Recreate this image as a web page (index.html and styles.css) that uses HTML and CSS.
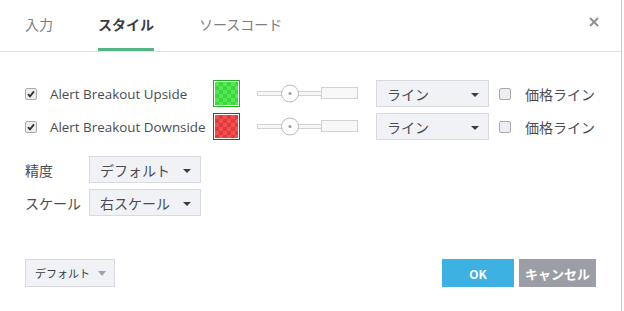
FILE: index.html
```html
<!DOCTYPE html>
<html lang="ja">
<head>
    <meta charset="UTF-8">
    <title>スタイル</title>
    <link rel="stylesheet" href="styles.css">
</head>
<body>
    <div class="dialog">
        <div class="header">
            <div class="tabs">
                <span class="tab">入力</span>
                <span class="tab active">スタイル</span>
                <span class="tab">ソースコード</span>
            </div>
            <span class="close">
                <svg width="10" height="10" viewBox="0 0 10 10"><path d="M1 1L9 9M9 1L1 9" stroke="#8f9197" stroke-width="2"/></svg>
            </span>
        </div>

        <div class="content">
            <div class="plot-row">
                <span class="check on"><svg width="12" height="12" viewBox="0 0 12 12"><path d="M3 6.2L5 8.4L9 3.4" fill="none" stroke="#2f3135" stroke-width="1.8"/></svg></span>
                <span class="plot-name">Alert Breakout Upside</span>
                <span class="swatch green"><span class="swatch-fill"></span></span>
                <svg class="slider" width="104" height="20" viewBox="0 0 104 20">
                    <rect x="0.5" y="7.5" width="24" height="4" fill="#f7f7f7" stroke="#d0d2d6"/>
                    <rect x="41.5" y="7.5" width="24" height="4" fill="#f7f7f7" stroke="#d0d2d6"/>
                    <rect x="64.5" y="3.5" width="36" height="11" fill="#f8f8f8" stroke="#d0d2d6"/>
                    <circle cx="33" cy="9.5" r="8.5" fill="#fff" stroke="#b9bcc4"/>
                    <circle cx="33" cy="9.5" r="1.5" fill="#9a9da5"/>
                </svg>
                <div class="select line-select">ライン<span class="caret"></span></div>
                <span class="check"></span>
                <span class="price-label">価格ライン</span>
            </div>
            <div class="plot-row">
                <span class="check on"><svg width="12" height="12" viewBox="0 0 12 12"><path d="M3 6.2L5 8.4L9 3.4" fill="none" stroke="#2f3135" stroke-width="1.8"/></svg></span>
                <span class="plot-name">Alert Breakout Downside</span>
                <span class="swatch red"><span class="swatch-fill"></span></span>
                <svg class="slider" width="104" height="20" viewBox="0 0 104 20">
                    <rect x="0.5" y="7.5" width="24" height="4" fill="#f7f7f7" stroke="#d0d2d6"/>
                    <rect x="41.5" y="7.5" width="24" height="4" fill="#f7f7f7" stroke="#d0d2d6"/>
                    <rect x="64.5" y="3.5" width="36" height="11" fill="#f8f8f8" stroke="#d0d2d6"/>
                    <circle cx="33" cy="9.5" r="8.5" fill="#fff" stroke="#b9bcc4"/>
                    <circle cx="33" cy="9.5" r="1.5" fill="#9a9da5"/>
                </svg>
                <div class="select line-select">ライン<span class="caret"></span></div>
                <span class="check"></span>
                <span class="price-label">価格ライン</span>
            </div>

            <div class="field-row first">
                <span class="field-label">精度</span>
                <div class="select small-select">デフォルト<span class="caret"></span></div>
            </div>
            <div class="field-row">
                <span class="field-label">スケール</span>
                <div class="select small-select">右スケール<span class="caret"></span></div>
            </div>
        </div>

        <div class="footer">
            <div class="defaults">デフォルト<span class="caret light"></span></div>
            <div class="actions">
                <button class="btn ok">OK</button>
                <button class="btn cancel">キャンセル</button>
            </div>
        </div>
    </div>
    <div class="backdrop"></div>
</body>
</html>
```

FILE: styles.css
```css
body {
    margin: 0;
    display: flex;
    font-family: "Noto Sans CJK JP", "Noto Sans", sans-serif;
    background-color: #fff;
    color: #4a4c52;
}

.dialog {
    width: 621px;
    height: 311px;
    border-right: 1px solid #c9cacd;
    background-color: #fff;
    display: flex;
    flex-direction: column;
}

.backdrop {
    flex: 1;
    background-color: #fff;
}

.header {
    height: 51px;
    border-bottom: 1px solid #e0e1e4;
    display: flex;
    justify-content: space-between;
    padding: 0 22px 0 25px;
}

.tabs {
    display: flex;
    gap: 45px;
}

.tab {
    font-size: 14px;
    color: #7a7d84;
    line-height: 48px;
    height: 48px;
    border-bottom: 3px solid transparent;
}

.tab.active {
    color: #3a3d44;
    font-weight: bold;
    border-bottom-color: #52b686;
}

.close {
    display: flex;
    align-items: flex-start;
    padding-top: 17px;
}

.content {
    padding: 28px 25px 0 25px;
    flex: 1;
}

.plot-row {
    display: flex;
    align-items: center;
    height: 27px;
    margin-bottom: 6px;
}

.check {
    width: 10px;
    height: 10px;
    border: 1px solid #a8aab0;
    border-radius: 2px;
    background-color: #eceef1;
    display: flex;
}

.check svg {
    margin: -1px;
}

.plot-name {
    font-family: "Open Sans", sans-serif;
    font-size: 13.4px;
    color: #4a4c52;
    margin-left: 13px;
    width: 163px;
}

.swatch {
    width: 27px;
    height: 27px;
    border: 1px solid;
    padding: 1px;
    box-sizing: border-box;
    display: flex;
}

.swatch.green {
    border-color: #22b022;
}

.swatch.red {
    border-color: #b31c1c;
}

.swatch-fill {
    flex: 1;
    background-size: 8px 8px;
}

.green .swatch-fill {
    background-color: #48e048;
    background-image: repeating-conic-gradient(#3ed43e 0 25%, #52ea52 0 50%);
}

.red .swatch-fill {
    background-color: #ee4444;
    background-image: repeating-conic-gradient(#e03a3a 0 25%, #f25050 0 50%);
}

.slider {
    margin-left: 17px;
}

.select {
    box-sizing: border-box;
    height: 27px;
    border: 1px solid #d8dadf;
    background-color: #f1f2f6;
    font-size: 14px;
    color: #4a4c52;
    display: flex;
    align-items: center;
    justify-content: space-between;
    padding: 0 9px 0 10px;
}

.line-select {
    width: 113px;
    margin-left: 15px;
    margin-right: 10px;
}

.caret {
    width: 0;
    height: 0;
    border-left: 4px solid transparent;
    border-right: 4px solid transparent;
    border-top: 4px solid #3a3d44;
    margin-top: 2px;
}

.caret.light {
    border-left-width: 4px;
    border-right-width: 4px;
    border-top: 5px solid #a0a2a8;
    margin-left: 8px;
    margin-top: 0;
}

.price-label {
    font-size: 14px;
    margin-left: 14px;
    color: #4a4c52;
}

.field-row {
    display: flex;
    align-items: center;
    height: 27px;
    margin-bottom: 6px;
}

.field-row.first {
    margin-top: 16px;
}

.field-label {
    width: 64px;
    font-size: 14px;
}

.small-select {
    width: 112px;
    padding-left: 10px;
}

.footer {
    display: flex;
    justify-content: space-between;
    align-items: flex-start;
    padding: 0 25px 0 25px;
    height: 52px;
}

.defaults {
    box-sizing: border-box;
    width: 90px;
    height: 28px;
    border: 1px solid #d8dadf;
    background-color: #f1f2f6;
    font-size: 11px;
    white-space: nowrap;
    display: flex;
    align-items: center;
    padding-left: 9px;
    color: #3a3d44;
}

.actions {
    display: flex;
    gap: 5px;
}

.btn {
    height: 28px;
    border: none;
    color: #fff;
    font-family: "Noto Sans CJK JP", "Noto Sans", sans-serif;
    font-weight: bold;
    font-size: 12px;
    padding: 0;
}

.btn.ok {
    width: 72px;
    background-color: #3cb1e2;
}

.btn.cancel {
    width: 77px;
    background-color: #9b9ea6;
    font-size: 13px;
}
```
